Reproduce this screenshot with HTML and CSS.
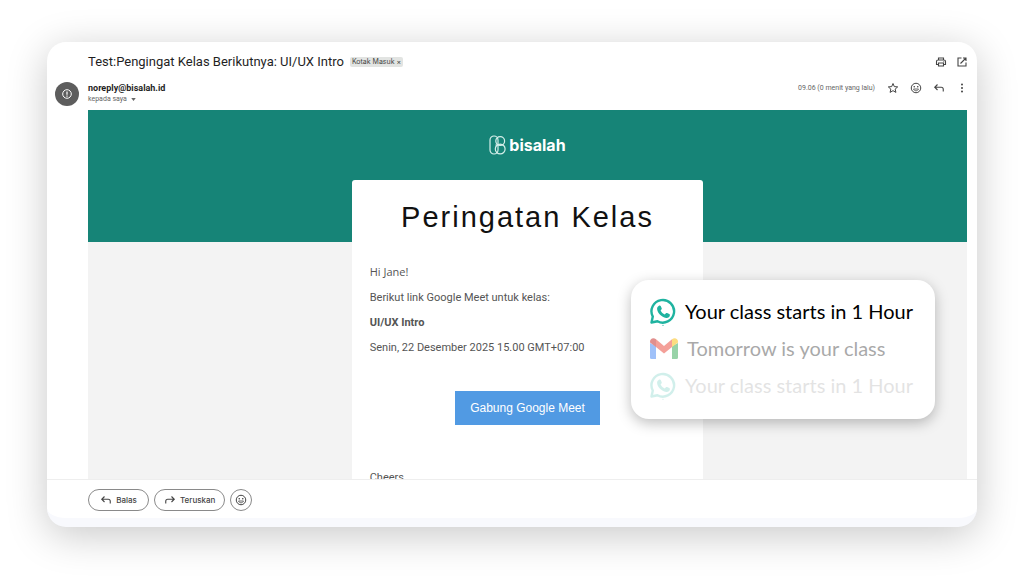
FILE: index.html
```html
<!DOCTYPE html>
<html lang="id">
<head>
<meta charset="utf-8">
<meta name="viewport" content="width=device-width, initial-scale=1">
<title>Pengingat Kelas Berikutnya</title>
<link rel="stylesheet" href="styles.css">
</head>
<body>
<svg class="sprite" aria-hidden="true">
  <symbol id="reply" viewBox="0 0 24 24"><path d="M9 5 3.500 10.500 9 16M4 10.500h12.500a4 4 0 0 1 4 4V19" fill="none" stroke="currentColor" stroke-width="2.200"/></symbol>
  <symbol id="smile" viewBox="0 0 24 24"><circle cx="12" cy="12" r="9.500" fill="none" stroke="currentColor" stroke-width="2"/><circle cx="8.500" cy="9.500" r="1.600" fill="currentColor"/><circle cx="15.500" cy="9.500" r="1.600" fill="currentColor"/><path d="M7 14h10c-.8 2.200-2.700 3.600-5 3.600S7.800 16.200 7 14z" fill="none" stroke="currentColor" stroke-width="1.600"/></symbol>
  <symbol id="chat-phone" viewBox="0 0 26 28"><path d="M1.500 24.500 2.800 18.600A11.300 11.300 0 1 1 7.500 23.300Z" fill="none" stroke="currentColor" stroke-width="2.400" stroke-linejoin="round"/><path d="M9.300 7.600c.5-.3 1.100-.1 1.400.4l1 2.300c.2.500.1.900-.3 1.300l-.8.900c.9 1.900 2.300 3.200 4.200 4.100l1.100-1.300c.3-.4.8-.5 1.200-.3l2.200 1.100c.5.200.7.600.6 1.100-.3 1.900-1.900 3-3.800 2.700-4.700-.8-8.400-4.500-9-8.600-.2-1.500.8-3 2.200-3.700z" fill="currentColor"/><circle cx="13" cy="27.300" r="0.600" fill="currentColor"/></symbol>
</svg>

<main class="window">
  <header class="subject">
    <h1 class="subject-title">Test:Pengingat Kelas Berikutnya: UI/UX Intro</h1>
    <span class="label">Kotak Masuk <button class="label-close" aria-label="Hapus label">×</button></span>
    <div class="subject-tools">
      <button class="icon-button" aria-label="Cetak"><svg class="icon" viewBox="0 0 24 24"><path d="M7 8V4h10v4M7 17H3v-6a3 3 0 0 1 3-3h12a3 3 0 0 1 3 3v6h-4M7 14h10v6H7z" fill="none" stroke="currentColor" stroke-width="2.200"/><circle cx="17.500" cy="11.500" r="1.200" fill="currentColor"/></svg></button>
      <button class="icon-button" aria-label="Buka di jendela baru"><svg class="icon" viewBox="0 0 24 24"><path d="M11 4H4v16h16v-7M14 4h6v6M20 4 9 15" fill="none" stroke="currentColor" stroke-width="2.200"/></svg></button>
    </div>
  </header>

  <section class="sender">
    <svg class="avatar" viewBox="0 0 24 24" aria-hidden="true"><circle cx="12" cy="12" r="12" fill="#5d5d5d"/><circle cx="12" cy="12" r="4.300" fill="none" stroke="#fff" stroke-width="1"/><path d="M12 9.400v3.300M12 13.600v1.100" stroke="#fff" stroke-width="1.200"/></svg>
    <div class="sender-text">
      <strong class="sender-name">noreply@bisalah.id</strong>
      <button class="recipient">kepada saya <svg class="caret" viewBox="0 0 6 4" aria-hidden="true"><path d="M0 0h6L3 4z" fill="currentColor"/></svg></button>
    </div>
    <time class="time">09.06 (0 menit yang lalu)</time>
    <div class="sender-tools">
      <button class="icon-button" aria-label="Beri bintang"><svg class="icon" viewBox="0 0 24 24"><path d="m12 3 2.600 6.200 6.800.6-5.100 4.400 1.500 6.600-5.800-3.500-5.800 3.500 1.500-6.600-5.100-4.400 6.800-.6z" fill="none" stroke="currentColor" stroke-width="2"/></svg></button>
      <button class="icon-button" aria-label="Tambahkan reaksi"><svg class="icon"><use href="#smile"/></svg></button>
      <button class="icon-button" aria-label="Balas"><svg class="icon"><use href="#reply"/></svg></button>
      <button class="icon-button" aria-label="Lainnya"><svg class="icon" viewBox="0 0 24 24" fill="currentColor"><circle cx="12" cy="5" r="2"/><circle cx="12" cy="12" r="2"/><circle cx="12" cy="19" r="2"/></svg></button>
    </div>
  </section>

  <article class="mail">
    <div class="brand">
      <svg class="brand-mark" viewBox="0 0 17 20" aria-hidden="true"><g fill="none" stroke="#d5efea" stroke-width="1.200"><rect x="1" y="1" width="8" height="18" rx="4"/><circle cx="11.200" cy="6" r="4.400"/><circle cx="11.200" cy="14" r="4.900"/><path d="M6.500 10h8"/></g></svg>
      <span class="brand-name">bisalah</span>
    </div>
    <div class="letter">
      <h2 class="letter-title">Peringatan Kelas</h2>
      <p class="line greeting">Hi Jane!</p>
      <p class="line">Berikut link Google Meet untuk kelas:</p>
      <p class="line"><strong>UI/UX Intro</strong></p>
      <p class="line">Senin, 22 Desember 2025 15.00 GMT+07:00</p>
      <a class="join" href="#">Gabung Google Meet</a>
      <p class="line">Cheers,</p>
    </div>
  </article>

  <footer class="actions">
    <button class="pill"><svg class="icon"><use href="#reply"/></svg>Balas</button>
    <button class="pill"><svg class="icon flip"><use href="#reply"/></svg>Teruskan</button>
    <button class="pill round" aria-label="Tambahkan reaksi"><svg class="icon"><use href="#smile"/></svg></button>
  </footer>

  <ul class="toast">
    <li class="notice"><svg class="notice-icon"><use href="#chat-phone"/></svg>Your class starts in 1 Hour</li>
    <li class="notice faded"><svg class="notice-icon wide" viewBox="0 0 28 22" aria-hidden="true"><path d="M0 5v14.500A1.500 1.500 0 0 0 1.500 21H6V8z" fill="#4285f4"/><path d="M28 5v14.500a1.500 1.500 0 0 1-1.500 1.500H22V8z" fill="#34a853"/><path d="M6 1.300 14 8l8-6.700V9l-8 6.500L6 9z" fill="#ea4335"/><path d="M0 3.500C0 .5 3.500-1 6 1.300V9L0 4.500z" fill="#c5221f"/><path d="M28 3.500C28 .5 24.500-1 22 1.300V9l6-4.500z" fill="#fbbc04"/></svg>Tomorrow is your class</li>
    <li class="notice faint"><svg class="notice-icon"><use href="#chat-phone"/></svg>Your class starts in 1 Hour</li>
  </ul>
</main>
</body>
</html>
```

FILE: styles.css
```css
* { box-sizing: border-box; }

body {
  margin: 0;
  height: 100vh;
  padding: 42px 47px 51px;
  display: flex;
  background: #fff;
  color: #1f1f1f;
  font-family: "Roboto", "Liberation Sans", sans-serif;
}

h1, h2, p, ul { margin: 0; padding: 0; }

button {
  padding: 0;
  border: 0;
  background: none;
  color: inherit;
  font: inherit;
  cursor: pointer;
}

.sprite { position: absolute; width: 0; height: 0; }

.window {
  position: relative;
  flex: 1;
  min-width: 0;
  display: flex;
  flex-direction: column;
  border-bottom: 9px solid #f8f9fd;
  border-radius: 19px;
  background: #fff;
  box-shadow: 0 8px 40px rgba(0, 0, 0, 0.22);
}

.icon { display: block; width: 12px; height: 12px; }
.icon-button { color: #444; }
.flip { transform: scaleX(-1); }

.subject {
  display: flex;
  align-items: center;
  gap: 6px;
  height: 40px;
  padding: 0 9px 0 41px;
}
.subject-title {
  font-size: 13px;
  font-weight: 400;
  line-height: 20px;
}
.label {
  padding: 0 2px;
  border-radius: 2px;
  background: #e2e4e2;
  color: #444;
  font-family: "Inter", sans-serif;
  font-size: 7px;
  line-height: 10px;
}
.subject-tools, .sender-tools { display: flex; }
.subject-tools { gap: 9px; margin-left: auto; }
.sender-tools { align-items: flex-start; gap: 11px; }

.sender {
  display: flex;
  height: 28px;
  padding: 0 9px 0 8px;
}
.avatar { width: 24px; height: 24px; margin-right: 9px; }
.sender-text { display: flex; flex-direction: column; align-items: flex-start; }
.sender-name { font-size: 9px; font-weight: 700; line-height: 12px; }
.recipient { color: #666; font-size: 7px; line-height: 10px; }
.caret { width: 5px; height: 3px; margin-left: 2px; vertical-align: middle; }
.time {
  margin: 0 12px 0 auto;
  color: #666;
  font-size: 7px;
  line-height: 12px;
}

.mail {
  flex: 1;
  min-height: 0;
  margin: 0 10px 0 41px;
  overflow: hidden;
  background: linear-gradient(#168477 132px, #f3f3f3 132px);
}
.brand {
  display: flex;
  align-items: center;
  justify-content: center;
  gap: 3px;
  height: 70px;
}
.brand-mark { width: 17px; height: 20px; }
.brand-name {
  color: #fff;
  font-family: "Inter", sans-serif;
  font-size: 16px;
  font-weight: 700;
  line-height: 20px;
}
.letter {
  display: flex;
  flex-direction: column;
  width: 40%;
  min-width: 300px;
  margin: 0 auto;
  padding: 17px 18px 0;
  border-radius: 3px 3px 0 0;
  background: #fff;
  color: #555;
  font-size: 11px;
}
.letter-title {
  margin-bottom: 22px;
  color: #111;
  font-family: "Liberation Sans", Arial, sans-serif;
  font-size: 29px;
  font-weight: 400;
  letter-spacing: 2px;
  line-height: 40px;
  text-align: center;
}
.line { line-height: 25px; }
.greeting { font-family: "Open Sans", sans-serif; line-height: 26px; }
.join {
  align-self: center;
  margin: 31px 0 40px;
  padding: 0 15px;
  background: #519ae3;
  color: #fff;
  font-family: "Liberation Sans", Arial, sans-serif;
  font-size: 12px;
  line-height: 34px;
  text-decoration: none;
}

.actions {
  display: flex;
  gap: 5px;
  padding: 9px 41px 7px;
  border-top: 1px solid #eee;
}
.pill {
  display: flex;
  align-items: center;
  justify-content: center;
  gap: 4px;
  height: 22px;
  min-width: 61px;
  padding: 0 9px;
  border: 1px solid #8a8a8a;
  border-radius: 11px;
  color: #444;
  font-family: "Inter", sans-serif;
  font-size: 8px;
  font-weight: 500;
}
.round { width: 22px; min-width: 22px; padding: 0; }

.toast {
  position: absolute;
  right: 42px;
  bottom: 99px;
  padding: 13px 22px 15px 19px;
  border-radius: 18px;
  background: #fff;
  box-shadow: 0 4px 14px rgba(0, 0, 0, 0.26);
  color: #000;
  font-family: "Lato", sans-serif;
  font-size: 20px;
  list-style: none;
}
.notice {
  display: flex;
  align-items: center;
  gap: 9px;
  line-height: 37px;
}
.notice-icon { width: 26px; height: 28px; color: #1fb3a0; }
.wide { width: 28px; height: 22px; }
.faded { opacity: 0.5; color: #555; }
.faint { opacity: 0.2; color: #777; }
```
